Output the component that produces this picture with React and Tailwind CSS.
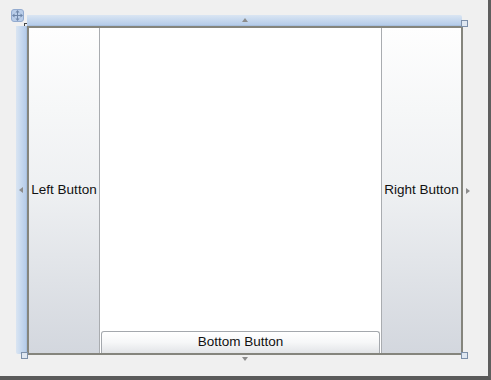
import React from "react";

const font = { fontFamily: '"Liberation Sans", Arial, sans-serif' };

const Handle = ({ className }) => (
  <div
    className={`absolute w-[7px] h-[7px] border border-[#7d90aa] bg-[#dfe7f1] ${className}`}
  />
);

const Arrow = ({ dir, className = "" }) => {
  const pts = {
    up: "0,5 3,1 6,5",
    down: "0,1 3,5 6,1",
    left: "5,0 1,3 5,6",
    right: "1,0 5,3 1,6",
  };
  return (
    <svg width="6" height="6" viewBox="0 0 6 6" className={`shrink-0 ${className}`}>
      <polygon points={pts[dir]} fill="#8c8c8c" />
    </svg>
  );
};

const MoveIcon = () => (
  <div className="absolute left-[11px] top-[9px] w-[13px] h-[13px] rounded-[3px] border border-[#93abd0] bg-[#b9cde9] flex items-center justify-center">
    <svg width="11" height="11" viewBox="0 0 11 11">
      <g stroke="#6f86a8" strokeWidth="1" fill="none">
        <line x1="5.5" y1="1.5" x2="5.5" y2="9.5" />
        <line x1="1.5" y1="5.5" x2="9.5" y2="5.5" />
      </g>
      <g fill="#6f86a8">
        <polygon points="5.5,0 3.5,2.5 7.5,2.5" />
        <polygon points="5.5,11 3.5,8.5 7.5,8.5" />
        <polygon points="0,5.5 2.5,3.5 2.5,7.5" />
        <polygon points="11,5.5 8.5,3.5 8.5,7.5" />
      </g>
    </svg>
  </div>
);

const SideButton = ({ label, className }) => (
  <div
    className={`flex items-center justify-center bg-linear-to-b from-[#fefefe] via-[#eef0f2] to-[#d3d7de] text-[13.5px] text-[#111] ${className}`}
  >
    {label}
  </div>
);

export default function App() {
  return (
    <div
      className="relative w-[491px] h-[380px] bg-[#f0f0f0] border-r-[3px] border-b-[4px] border-r-[#5e5e5e] border-b-[#5a5a5a] overflow-hidden"
      style={font}
    >
      <div className="pt-[15px] pl-[16px] grid grid-cols-[11px_436px_10px] grid-rows-[11px_329px_10px]">
        <div />
        {/* top adorner bar */}
        <div className="w-[435px] h-[11px] flex items-center justify-center bg-linear-to-b from-[#dae5f2] via-[#c7d9ef] to-[#b6cce9] border-b border-[#a8c0df] rounded-tr-[2px]">
          <Arrow dir="up" />
        </div>
        <div />
        {/* left adorner bar */}
        <div className="w-[11px] h-[328px] flex items-center justify-center bg-linear-to-r from-[#dae5f2] via-[#c7d9ef] to-[#b6cce9] border-r border-[#a8c0df] rounded-bl-[2px]">
          <Arrow dir="left" />
        </div>
        {/* frame */}
        <div className="w-[436px] h-[329px] border-2 border-[#85857d] bg-white flex">
          <SideButton label="Left Button" className="w-[71px] border-r border-[#a9acb0]" />
          <div className="flex-1 flex flex-col justify-end">
            <div className="mx-[1px] h-[22px] rounded-t-[3px] border border-b-0 border-[#a4a8ad] bg-linear-to-b from-[#ffffff] via-[#f6f7f8] to-[#e2e4e7] flex items-center justify-center text-[13.5px] text-[#111]">
              Bottom Button
            </div>
          </div>
          <SideButton label="Right Button" className="w-[80px] border-l border-[#a9acb0]" />
        </div>
        <div className="flex items-center pl-[2px]">
          <Arrow dir="right" />
        </div>
        <div />
        <div className="flex justify-center pt-[1px]">
          <Arrow dir="down" />
        </div>
        <div />
      </div>

      <MoveIcon />
      <div className="absolute left-[24px] top-[23px] w-[3px] h-[3px] border-l border-t border-[#444]" />

      <Handle className="left-[461px] top-[20px]" />
      <Handle className="left-[21px] top-[352px]" />
      <Handle className="left-[461px] top-[352px]" />
    </div>
  );
}
